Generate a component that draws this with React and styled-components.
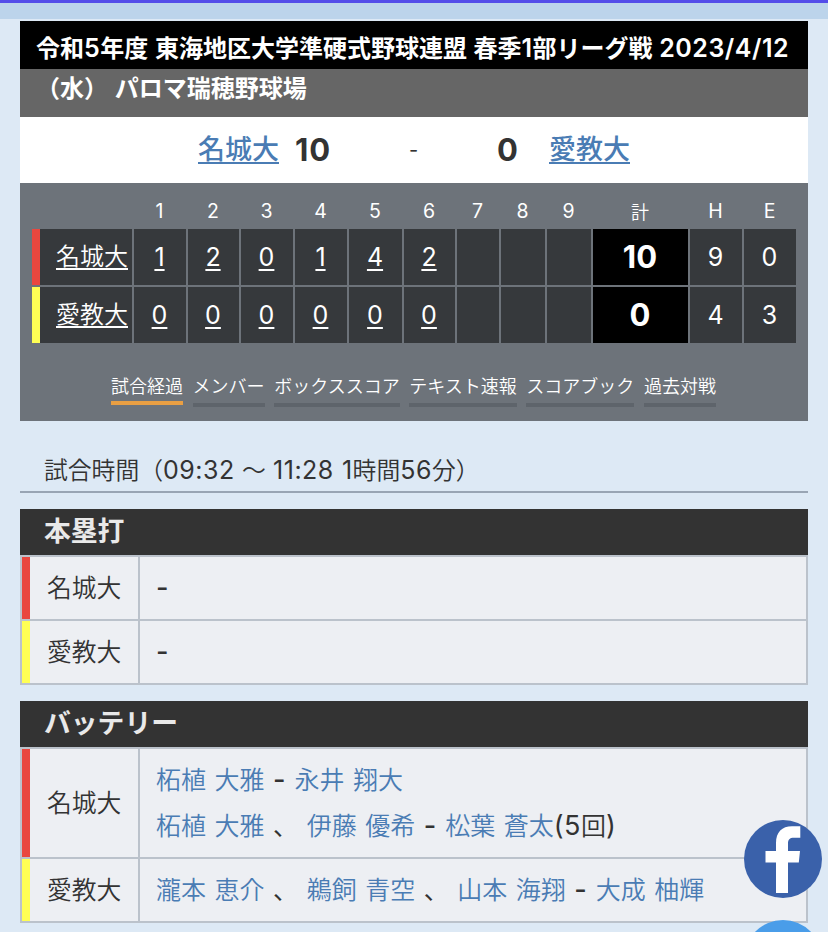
import React from 'react';
import styled, { createGlobalStyle } from 'styled-components';

const GlobalStyle = createGlobalStyle`
  * {
    box-sizing: border-box;
  }

  body {
    margin: 0;
    height: 932px;
    overflow: hidden;
    background: #dde9f5;
    color: #333;
    font-family: Inter, 'Noto Sans CJK JP', sans-serif;
    font-size: 24px;
  }

  a {
    color: #4a7cb4;
  }
`;

const Page = styled.div`
  height: 932px;
  overflow: hidden;
  border-top: 3px solid #544de9;
`;

const TopBar = styled.div`
  height: 16px;
  background: #bcd4eb;
`;

const Content = styled.main`
  padding: 2px 20px 0;
`;

const Title = styled.h1`
  height: 96px;
  margin: 0;
  padding: 8px 0 0 16px;
  background: linear-gradient(#000 50%, #666 50%);
  color: #fff;
  font-size: 24px;
  font-weight: 600;
  line-height: 40px;
  white-space: nowrap;
`;

const TitleLine = styled.span`
  display: block;
  word-spacing: 0.6px;
`;

const TitleNum = styled.span`
  font-size: 25px;
  letter-spacing: 0.5px;
  line-height: 1;
`;

const Versus = styled.div`
  display: grid;
  grid-template-columns: 178px 97px 114px 88px 52px 1fr;
  align-items: center;
  height: 66px;
  background: #fff;
  white-space: nowrap;
`;

const VersusTeam = styled.a`
  padding-bottom: 5px;
  font-size: 27px;
  font-weight: 500;
  text-decoration-thickness: 2px;
  text-underline-offset: 3px;
`;

const VersusScore = styled.b`
  padding-bottom: 1px;
  font-size: 31px;
  font-weight: 700;
  letter-spacing: 1px;
`;

const VersusDash = styled.span`
  font-size: 20px;
`;

const Board = styled.section`
  height: 238px;
  padding: 0 12px;
  background: #6d737a;
  color: #fff;
`;

const ScoreGrid = styled.div`
  display: grid;
  grid-template-columns: 100px 52px 51px 52px 52px 53px 51px 42px 44px 44px 95px 52px 52px;
  grid-template-rows: 44px 56px 56px;
  gap: 2px;
`;

const Inning = styled.div`
  display: flex;
  align-items: center;
  justify-content: center;
  padding: 11px 1px 0 0;
  font-size: ${p => (p.$kanji ? 18 : 19.5)}px;
  font-weight: ${p => (p.$kanji ? 350 : 400)};
`;

const BoardTeam = styled.div`
  display: flex;
  align-items: center;
  padding: 0 0 5px 16px;
  border-left: 8px solid ${p => p.$color};
  background: #36393c;
  font-weight: 350;
`;

const Cell = styled.div`
  display: flex;
  align-items: center;
  justify-content: center;
  padding: 0 1px ${p => (p.$total ? 2 : 1)}px 0;
  background: ${p => (p.$total ? '#000' : '#36393c')};
  font-size: ${p => (p.$total ? 31 : 25)}px;
  font-weight: ${p => (p.$total ? 700 : 400)};
`;

const BoardLink = styled.a`
  color: #fff;
  text-decoration: underline;
  text-decoration-thickness: 2px;
  text-underline-offset: 3px;
  text-decoration-skip-ink: none;
`;

const Tabs = styled.nav`
  display: flex;
  align-items: flex-start;
  gap: 9.6px;
  padding: 30px 0 0 79px;
`;

const Tab = styled.a`
  height: ${p => (p.$active ? 32 : 34)}px;
  border-bottom: 4px solid ${p => (p.$active ? '#e99f43' : '#5e646b')};
  color: #fff;
  font-size: 18px;
  font-weight: 350;
  line-height: 28px;
  text-decoration: none;
  white-space: nowrap;
`;

const GameTime = styled.p`
  height: 72px;
  margin: 0 0 16px;
  padding: 28px 0 0 24px;
  border-bottom: 2px solid #99a5b4;
  font-size: 23.8px;
  font-weight: 350;
  line-height: 44px;
  word-spacing: 0.6px;
`;

const Num = styled.span`
  font-size: ${p => p.$size || 25}px;
  font-weight: 400;
  letter-spacing: 0.5px;
  line-height: 1;
`;

const Section = styled.section`
  margin-bottom: 16px;
`;

const SectionTitle = styled.h2`
  height: 46px;
  margin: 0;
  padding-left: 24px;
  background: #333;
  color: #e9e9e9;
  font-size: 26.8px;
  font-weight: 600;
  line-height: 44px;
`;

const TeamTable = styled.div`
  display: grid;
  grid-template-columns: 116px 1fr;
  gap: 2px;
  padding: 2px;
  background: #bbc2cb;
`;

const TeamName = styled.div`
  display: flex;
  align-items: center;
  padding: 0 0 4px 17px;
  border-left: 8px solid ${p => p.$color};
  background: #edeff3;
  font-size: 24.8px;
  font-weight: 350;
`;

const TeamDetail = styled.div`
  padding: 8px 16px;
  background: #edeff3;
  font-size: 25px;
  line-height: 46px;
  white-space: nowrap;
  word-spacing: 1.5px;
`;

const Player = styled.a`
  font-weight: 350;
  text-decoration: none;
`;

const Dash = styled.span`
  font-size: 27px;
  font-weight: 500;
  letter-spacing: 0.4px;
  line-height: 1;
`;

const Share = styled.aside`
  position: absolute;
  top: 820px;
  left: 744px;
  display: grid;
  gap: 22px;
  height: 112px;
  overflow: hidden;
`;

const RED = '#e9473f';
const YELLOW = '#ffff54';

const innings = ['1', '2', '3', '4', '5', '6', '7', '8', '9', '計', 'H', 'E'];

const teams = [
  { name: '名城大', color: RED, runs: [1, 2, 0, 1, 4, 2, '', '', ''], total: 10, hits: 9, errors: 0 },
  { name: '愛教大', color: YELLOW, runs: [0, 0, 0, 0, 0, 0, '', '', ''], total: 0, hits: 4, errors: 3 },
];

const tabs = ['試合経過', 'メンバー', 'ボックススコア', 'テキスト速報', 'スコアブック', '過去対戦'];

const ScoreRow = ({ team }) => (
  <>
    <BoardTeam $color={team.color}>
      <BoardLink>{team.name}</BoardLink>
    </BoardTeam>
    {team.runs.map((run, i) => (
      <Cell key={i}>{run !== '' && <BoardLink>{run}</BoardLink>}</Cell>
    ))}
    <Cell $total>{team.total}</Cell>
    <Cell>{team.hits}</Cell>
    <Cell>{team.errors}</Cell>
  </>
);

const ShareButtons = () => (
  <Share>
    <svg width="78" height="78" viewBox="0 0 78 78">
      <circle cx="39" cy="39" r="39" fill="#3a61aa" />
      <path
        fill="#fff"
        d="M32 73V42.500H21.500V31H32v-8C32 12 38 6.200 48 6.200h8.300v11.500H50c-4.400 0-6 1.800-6 6V31h12l-1.200 11.500H44V73z"
      />
    </svg>
    <svg width="78" height="78" viewBox="0 0 78 78">
      <circle cx="39" cy="39" r="39" fill="#4a9de9" />
    </svg>
  </Share>
);

const App = () => (
  <Page>
    <GlobalStyle />
    <TopBar />
    <Content>
      <Title>
        <TitleLine>
          令和<TitleNum>5</TitleNum>年度 東海地区大学準硬式野球連盟 春季<TitleNum>1</TitleNum>部リーグ戦 <TitleNum>2023/4/12</TitleNum>
        </TitleLine>
        <TitleLine>（水） パロマ瑞穂野球場</TitleLine>
      </Title>
      <Versus>
        <span />
        <VersusTeam href="#">名城大</VersusTeam>
        <VersusScore>10</VersusScore>
        <VersusDash>-</VersusDash>
        <VersusScore>0</VersusScore>
        <VersusTeam href="#">愛教大</VersusTeam>
      </Versus>
      <Board>
        <ScoreGrid>
          <span />
          {innings.map(label => (
            <Inning key={label} $kanji={label === '計'}>{label}</Inning>
          ))}
          {teams.map(team => (
            <ScoreRow key={team.name} team={team} />
          ))}
        </ScoreGrid>
        <Tabs>
          {tabs.map((tab, i) => (
            <Tab key={tab} $active={i === 0}>{tab}</Tab>
          ))}
        </Tabs>
      </Board>
      <GameTime>
        試合時間（<Num>09:32</Num> 〜 <Num>11:28 1</Num>時間<Num>56</Num>分）
      </GameTime>
      <Section>
        <SectionTitle>本塁打</SectionTitle>
        <TeamTable>
          <TeamName $color={RED}>名城大</TeamName>
          <TeamDetail><Dash>-</Dash></TeamDetail>
          <TeamName $color={YELLOW}>愛教大</TeamName>
          <TeamDetail><Dash>-</Dash></TeamDetail>
        </TeamTable>
      </Section>
      <Section>
        <SectionTitle>バッテリー</SectionTitle>
        <TeamTable>
          <TeamName $color={RED}>名城大</TeamName>
          <TeamDetail>
            <Player>柘植 大雅</Player> <Dash>-</Dash> <Player>永井 翔大</Player>
            <br />
            <Player>柘植 大雅</Player> 、 <Player>伊藤 優希</Player> <Dash>-</Dash> <Player>松葉 蒼太</Player>
            <Num $size={27}>(5</Num><Player as="span">回</Player><Num $size={27}>)</Num>
          </TeamDetail>
          <TeamName $color={YELLOW}>愛教大</TeamName>
          <TeamDetail>
            <Player>瀧本 恵介</Player> 、 <Player>鵜飼 青空</Player> 、 <Player>山本 海翔</Player> <Dash>-</Dash> <Player>大成 柚輝</Player>
          </TeamDetail>
        </TeamTable>
      </Section>
    </Content>
    <ShareButtons />
  </Page>
);

export default App;
